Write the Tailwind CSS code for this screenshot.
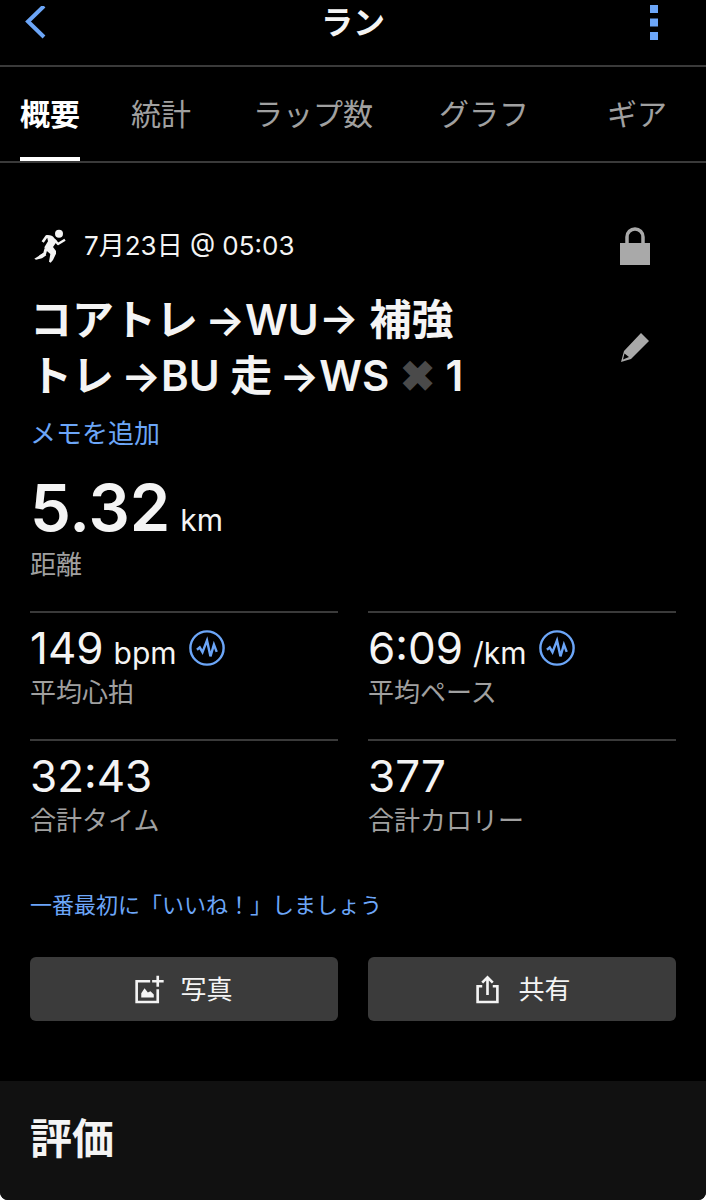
<!DOCTYPE html>
<html lang="ja">
<head>
  <meta charset="UTF-8">
  <meta name="viewport" content="width=device-width, initial-scale=1">
  <title>ラン</title>
  <script src="https://cdn.jsdelivr.net/npm/@tailwindcss/browser@4"></script>
</head>
<body class="bg-white font-['Inter','Noto_Sans_CJK_JP',sans-serif] text-[#f4f4f4]">
  <div class="min-h-screen flex flex-col bg-black rounded-b-lg overflow-hidden">

    <!-- Header -->
    <header class="grid grid-cols-[1fr_auto_1fr] items-center px-6 pb-5 border-b-2 border-[#3a3a3a]">
      <button type="button" aria-label="戻る" class="justify-self-start">
        <svg class="w-[22px] h-[34px]" viewBox="0 0 22 34" fill="none" stroke="#6ca6f8" stroke-width="4">
          <path d="M20 0 L4 15.500 L20 31"/>
        </svg>
      </button>
      <h1 class="text-[32px] leading-[45px] font-semibold">ラン</h1>
      <button type="button" aria-label="メニュー" class="justify-self-end px-6">
        <svg class="w-2 h-[35px]" viewBox="0 0 8 35" fill="#6ca6f8">
          <path d="M0 0h8v8H0zM0 13.500h8v8H0zM0 27h8v8H0z"/>
        </svg>
      </button>
    </header>

    <!-- Tabs -->
    <nav class="grid grid-cols-[111fr_122fr_186fr_168fr_99fr] pl-5 text-[30px] leading-[94px] text-[#a0a0a0] border-b-2 border-[#3a3a3a] whitespace-nowrap">
      <a href="#" aria-current="page" class="justify-self-start h-[94px] border-b-4 border-white font-bold text-white">概要</a>
      <a href="#">統計</a>
      <a href="#">ラップ数</a>
      <a href="#">グラフ</a>
      <a href="#">ギア</a>
    </nav>

    <main class="px-[30px] pt-[63px] pb-[60px]">
      <!-- Activity -->
      <div class="flex items-center justify-between pr-[26px]">
        <div class="flex items-center gap-[18px] text-[26px] leading-10">
          <svg class="w-9 h-[34px]" viewBox="32 40 108 100" fill="none" stroke="#f4f4f4" stroke-linejoin="round">
            <circle cx="119" cy="53" r="12" fill="#f4f4f4" stroke="none"/>
            <path d="M82 57 L100 61 L113 76 L101 93 L110 105 L110 113 L101 132 L94 140 L89 137 L93 114 L80 103 L75 94 L86 76Z" fill="#f4f4f4" stroke="none"/>
            <path d="M97 63 L82 61 L70 78" stroke-width="8"/>
            <path d="M106 72 L116 84 L137 71" stroke-width="7"/>
            <path d="M80 98 L76 113 L62 122" stroke-width="9"/>
            <path d="M74 110 L45 128 L50 131 L68 127 L81 118Z" fill="#f4f4f4" stroke="none"/>
          </svg>
          <span>7月23日 @ 05:03</span>
        </div>
        <svg class="w-[30px] h-[38px]" viewBox="0 0 30 38" role="img" aria-label="非公開">
          <path d="M0 16h30v22H0z" fill="#a9a9a9"/>
          <path d="M7 17V10a8 8 0 0 1 16 0v7" fill="none" stroke="#a9a9a9" stroke-width="3.500"/>
        </svg>
      </div>

      <div class="mt-[26px] flex items-center justify-between pr-[26px]">
        <h2 class="text-[42px] leading-[56px] font-semibold">コアトレ&thinsp;→WU→ 補強<br>トレ&thinsp;→BU 走&thinsp;→WS <span class="text-[#4a4a4a]">✖</span> 1</h2>
        <button type="button" aria-label="編集">
          <svg class="w-[30px] h-[30px]" viewBox="0 0 30 30" fill="#a9a9a9" fill-rule="evenodd">
            <path d="M1 29 L4 18 L21 0 L29 8 L11 26Z M4.500 20.500 L3 26.500 L9 24Z"/>
          </svg>
        </button>
      </div>

      <a href="#" class="mt-3 block text-[26px] leading-9 text-[#6ca6f8]">メモを追加</a>

      <!-- Stats -->
      <dl class="mt-5 grid grid-cols-2 gap-x-[30px]">
        <div class="col-span-2 flex flex-col-reverse gap-1 pb-7">
          <dt class="text-[26px] leading-9 text-[#a0a0a0]">距離</dt>
          <dd class="flex items-baseline gap-[10px] text-[65px] leading-[71px] font-semibold">5.32<span class="text-[30px] leading-none font-normal">km</span></dd>
        </div>
        <div class="flex flex-col-reverse justify-end border-t-2 border-[#3a3a3a] pt-2 pb-7">
          <dt class="text-[26px] leading-9 text-[#a0a0a0]">平均心拍</dt>
          <dd class="flex items-center gap-3 text-[44px] leading-[54px]">
            <span class="flex items-baseline gap-[10px]">149<span class="text-[30px] leading-none">bpm</span></span>
            <svg class="w-9 h-9" viewBox="512 480 104 104" fill="none" stroke="#6ca6f8" stroke-width="7">
              <circle cx="564" cy="532" r="48"/>
              <path d="M535 537 L543 530 L551 544 L564 510 L574 556 L584 522 L592 543"/>
            </svg>
          </dd>
        </div>
        <div class="flex flex-col-reverse justify-end border-t-2 border-[#3a3a3a] pt-2 pb-7">
          <dt class="text-[26px] leading-9 text-[#a0a0a0]">平均ペース</dt>
          <dd class="flex items-center gap-3 text-[44px] leading-[54px]">
            <span class="flex items-baseline gap-[10px]">6:09<span class="text-[30px] leading-none">/km</span></span>
            <svg class="w-9 h-9" viewBox="512 480 104 104" fill="none" stroke="#6ca6f8" stroke-width="7">
              <circle cx="564" cy="532" r="48"/>
              <path d="M535 537 L543 530 L551 544 L564 510 L574 556 L584 522 L592 543"/>
            </svg>
          </dd>
        </div>
        <div class="flex flex-col-reverse justify-end border-t-2 border-[#3a3a3a] pt-2">
          <dt class="text-[26px] leading-9 text-[#a0a0a0]">合計タイム</dt>
          <dd class="text-[44px] leading-[54px]">32:43</dd>
        </div>
        <div class="flex flex-col-reverse justify-end border-t-2 border-[#3a3a3a] pt-2">
          <dt class="text-[26px] leading-9 text-[#a0a0a0]">合計カロリー</dt>
          <dd class="text-[44px] leading-[54px]">377</dd>
        </div>
      </dl>

      <a href="#" class="mt-[50px] block text-[22px] leading-8 text-[#6ca6f8]">一番最初に「いいね！」しましょう</a>

      <!-- Actions -->
      <div class="mt-9 grid grid-cols-2 gap-[30px] text-[26px]">
        <button type="button" class="h-16 flex items-center justify-center gap-4 rounded-md bg-[#3b3b3b]">
          <svg class="w-[29px] h-[29px]" viewBox="50 71 88 88" fill="none" stroke="#f4f4f4" stroke-width="8">
            <path d="M96 90 H55 V153 H119 V114"/>
            <path d="M119 73 V107 M102 90 H137"/>
            <path d="M69 139 V126 L79 111 L89 124 L97 120 L107 130 V139Z" fill="#f4f4f4" stroke="none"/>
          </svg>
          写真
        </button>
        <button type="button" class="h-16 flex items-center justify-center gap-4 rounded-md bg-[#3b3b3b]">
          <svg class="w-[29px] h-[29px]" viewBox="40 71 88 88" fill="none" stroke="#f4f4f4" stroke-width="8">
            <path d="M68 105 H54 V153 H114 V105 H100"/>
            <path d="M84 132 V79 M68 94 L84 78 L100 94"/>
          </svg>
          共有
        </button>
      </div>
    </main>

    <!-- Rating -->
    <section class="flex-1 bg-[#111] px-[30px] pt-[30px]">
      <h2 class="text-[42px] leading-[56px] font-bold">評価</h2>
    </section>
  </div>
</body>
</html>
